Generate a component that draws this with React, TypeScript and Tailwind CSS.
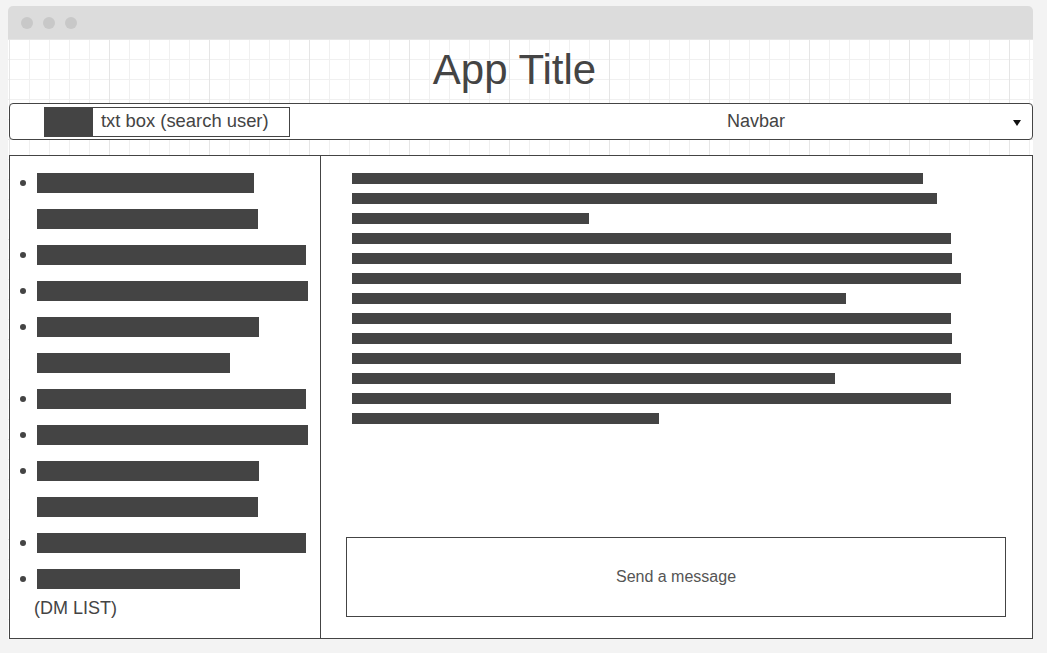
import React from "react";

const dmRows: number[][] = [
  [217, 221],
  [269],
  [271],
  [222, 193],
  [269],
  [271],
  [222, 221],
  [269],
  [203],
];

const messageLines = [571, 585, 237, 599, 600, 609, 494, 599, 600, 609, 483, 599, 307];

export default function App() {
  return (
    <div className="h-[653px] w-full overflow-hidden bg-[#f3f3f3] pt-[6px] pl-[8px] font-['Liberation_Sans',Arial,sans-serif] text-[#444]">
      <div className="w-[1025px]">
        {/* window title bar */}
        <div className="flex h-[33px] items-center gap-[10px] rounded-t-[5px] bg-[#dcdcdc] pl-[13px]">
          <span className="h-[12px] w-[12px] rounded-full bg-[#c8c8c8]" />
          <span className="h-[12px] w-[12px] rounded-full bg-[#c8c8c8]" />
          <span className="h-[12px] w-[12px] rounded-full bg-[#c8c8c8]" />
        </div>

        {/* grid paper content */}
        <div className="bg-white bg-[linear-gradient(to_right,#e5e5e5_1px,transparent_1px),linear-gradient(to_bottom,#e5e5e5_1px,transparent_1px),linear-gradient(to_right,#f0f0f0_1px,transparent_1px),linear-gradient(to_bottom,#f0f0f0_1px,transparent_1px)] bg-[size:100px_100px,100px_100px,20px_20px,20px_20px] bg-[position:1px_0px] pl-[1px]">
          <div className="flex h-[64px] items-center justify-center pr-[13px] pb-[2px] text-[42px] leading-none">
            App Title
          </div>

          {/* navbar */}
          <div className="flex h-[37px] w-[1024px] items-center rounded-[4px] border border-[#444] bg-white">
            <div className="ml-[34px] flex h-[30px] w-[246px] items-center border border-[#444] bg-white">
              <div className="h-full w-[48px] bg-[#444]" />
              <span className="ml-[8px] mb-[1px] text-[18.4px]">txt box (search user)</span>
            </div>
            <span className="ml-[437px] mb-[1px] text-[18px]">Navbar</span>
            <svg className="ml-[228px] mt-[2px]" width="8" height="6" viewBox="0 0 8 6">
              <polygon points="0,0 8,0 4,6" fill="#111" />
            </svg>
          </div>

          {/* main panel */}
          <div className="mt-[15px] flex h-[484px] w-[1024px] border border-[#444] bg-white">
            <div className="flex w-[311px] flex-col border-r border-[#444] pt-[17px]">
              <ul className="flex flex-col gap-[16px]">
                {dmRows.map((bars, i) => (
                  <li key={i} className="flex">
                    <div className="flex h-[20px] w-[27px] items-center pl-[10px]">
                      <span className="h-[6px] w-[6px] rounded-full bg-[#444]" />
                    </div>
                    <div className="flex flex-col gap-[16px]">
                      {bars.map((w, j) => (
                        <div key={j} className="h-[20px] bg-[#444]" style={{ width: w }} />
                      ))}
                    </div>
                  </li>
                ))}
              </ul>
              <div className="mt-[6px] pl-[24px] text-[18px]">(DM LIST)</div>
            </div>

            <div className="flex flex-1 flex-col">
              <div className="flex flex-col gap-[9px] pl-[31px] pt-[17px]">
                {messageLines.map((w, i) => (
                  <div key={i} className="h-[11px] bg-[#444]" style={{ width: w }} />
                ))}
              </div>
              <div className="flex-1" />
              <div className="mb-[21px] ml-[25px] flex h-[80px] w-[660px] items-center justify-center border border-[#444] text-[16px] text-[#555]">
                Send a message
              </div>
            </div>
          </div>
        </div>
      </div>
    </div>
  );
}
